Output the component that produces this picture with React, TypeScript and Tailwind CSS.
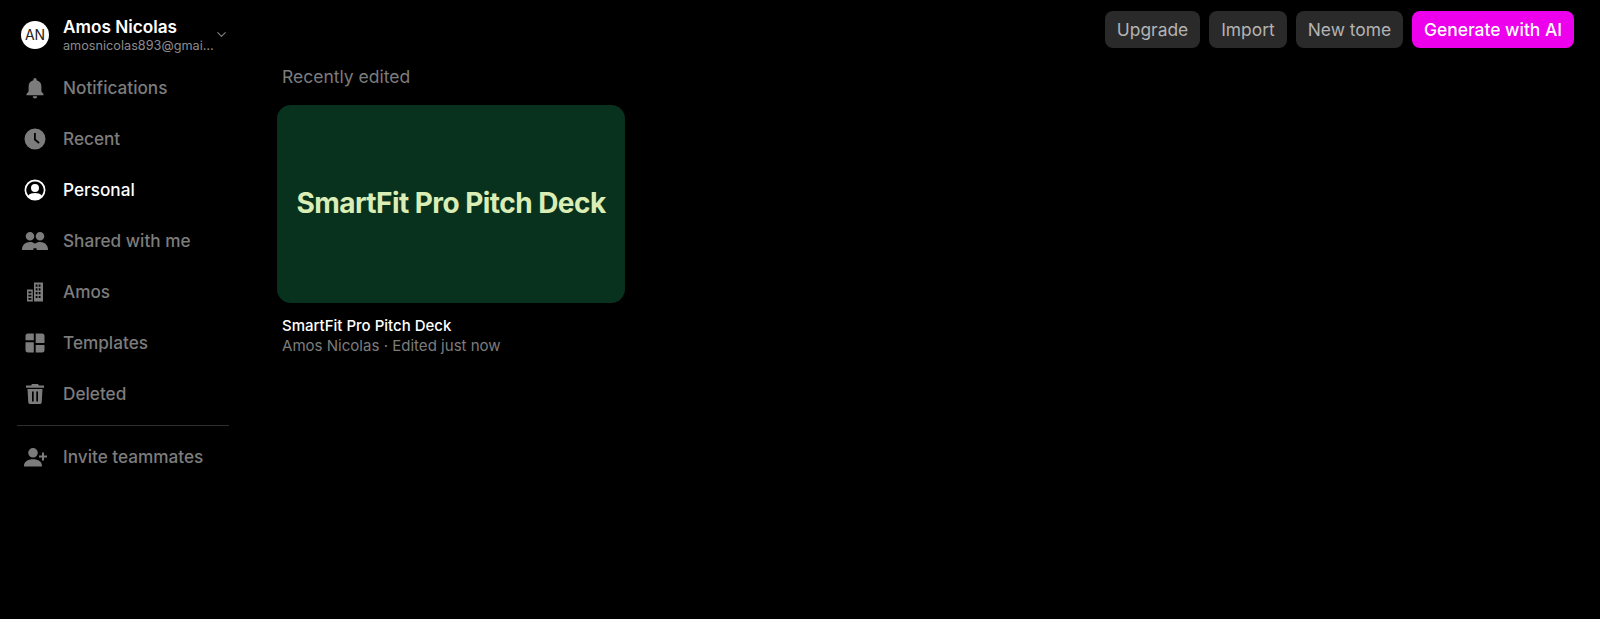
import React from "react";
import { ChevronDown } from "lucide-react";

const icons: Record<string, React.ReactNode> = {
  bell: <path d="M12 2a1.6 1.6 0 0 0-1.6 1.6v.6A6.6 6.6 0 0 0 5.6 10.6v5L3.5 18v1.2h17V18l-2.1-2.400v-5a6.600 6.600 0 0 0-4.800-6.400v-.6A1.600 1.600 0 0 0 12 2Zm-2.200 18.200a2.200 2.200 0 0 0 4.400 0Z" />,
  clock: <path fillRule="evenodd" d="M12 1.500a10.500 10.500 0 1 0 0 21 10.500 10.500 0 0 0 0-21ZM11 6h1.800v6l3.900 3.400-1.200 1.400L11 12.900Z" />,
  person: <path fillRule="evenodd" d="M12 1.500a10.500 10.500 0 1 0 0 21 10.500 10.500 0 0 0 0-21Zm0 1.900a8.600 8.600 0 0 1 6.700 14c-1.400-1.600-4-2.400-6.700-2.400s-5.300.8-6.700 2.400A8.600 8.600 0 0 1 12 3.400Zm0 2.600a4 4 0 1 0 0 8 4 4 0 0 0 0-8Z" />,
  people: <path d="M7 3a4.300 4.300 0 1 1 0 8.600A4.300 4.300 0 0 1 7 3Zm10 0a4.300 4.300 0 1 1 0 8.600A4.300 4.300 0 0 1 17 3ZM-1 20.500c0-4.500 3.400-7.500 8-7.500 2 0 3.700.6 5 1.800 1.300-1.200 3-1.800 5-1.800 4.600 0 8 3 8 7.500v.5H13.600v-.5c0-.4 0-.8-.1-1.200h-3c-.1.400-.1.800-.1 1.200v.5H-1Z" />,
  building: <path fillRule="evenodd" d="M11 2.500h9v19h-9Zm1.700 2v2.200h1.800V4.500Zm3 0v2.200h1.800V4.500Zm-3 3.800v2.200h1.800V8.300Zm3 0v2.200h1.800V8.300Zm-3 3.800v2.200h1.800v-2.200Zm3 0v2.200h1.800v-2.200Zm-3 3.800v2.200h1.800v-2.200Zm3 0v2.200h1.800v-2.200ZM4 9.500h5.800v12H4Zm1.400 2v1.800h3v-1.800Zm0 3.300v1.800h3v-1.800Zm0 3.200v1.800h3V18Z" />,
  templates: <path d="M5 2.500h5.800v6.800H2.500V5A2.500 2.500 0 0 1 5 2.500Zm7.700 0H19A2.500 2.500 0 0 1 21.500 5v7h-8.800ZM2.500 11.200h8.300v10.300H5A2.500 2.500 0 0 1 2.500 19Zm10.200 2.700h8.800V19a2.500 2.500 0 0 1-2.500 2.500h-6.300Z" />,
  trash: <path fillRule="evenodd" d="M9 2h6l1 1.500h5v2.200H3V3.500h5ZM4.500 7h15l-.8 13.500a2 2 0 0 1-2 1.500H7.300a2 2 0 0 1-2-1.500ZM9 9.500v10h1.700v-10Zm4.300 0v10H15v-10Z" />,
  invite: <path d="M10 3a4.800 4.800 0 1 1 0 9.600A4.800 4.800 0 0 1 10 3ZM1 21c0-4.500 3.800-6.800 9-6.800s9 2.300 9 6.800v.5H1ZM19 7.500h2v3h3v2h-3v3h-2v-3h-3v-2h3Z" />,
};

function NavItem({ icon, label, active = false }: { icon: string; label: string; active?: boolean }) {
  return (
    <div className={`flex h-[51px] items-center ${active ? "text-white" : "text-[#7c7c7c]"}`}>
      <div className="flex w-[63px] shrink-0 items-center justify-center pl-[7px]">
        <svg viewBox="0 0 24 24" className="h-[24px] w-[24px] overflow-visible" fill="currentColor">
          {icons[icon]}
        </svg>
      </div>
      <span className="text-[17.2px] font-medium leading-none">{label}</span>
    </div>
  );
}

function TopButton({ children, primary = false }: { children: React.ReactNode; primary?: boolean }) {
  return (
    <button
      className={`flex h-[37px] items-center rounded-[8px] px-[12px] pt-[1px] text-[17.4px] ${
        primary ? "bg-[#ed00eb] font-medium text-white" : "bg-[#2a2a2a] text-[#b3b3b3]"
      }`}
    >
      {children}
    </button>
  );
}

export default function App() {
  return (
    <div className="flex h-[619px] w-[1600px] overflow-hidden bg-black font-['Inter',sans-serif]">
      <aside className="flex w-[246px] shrink-0 flex-col pt-[11px]">
        <div className="flex h-[47px] items-center pl-[21px]">
          <div className="flex h-[28px] w-[28px] shrink-0 items-center justify-center rounded-full bg-white text-[14px] leading-none text-[#222]">
            AN
          </div>
          <div className="ml-[14px] flex w-[152px] shrink-0 flex-col">
            <span className="text-[17.2px] font-semibold leading-[22px] text-white">Amos Nicolas</span>
            <span className="whitespace-nowrap text-[12.7px] leading-[16px] text-[#8c8c8c]">amosnicolas893@gmai…</span>
          </div>
          <ChevronDown className="-ml-[1px] h-[15px] w-[15px] text-[#808080]" strokeWidth={1.75} />
        </div>
        <div className="flex flex-col pt-[4px]">
          <NavItem icon="bell" label="Notifications" />
          <NavItem icon="clock" label="Recent" />
          <NavItem icon="person" label="Personal" active />
          <NavItem icon="people" label="Shared with me" />
          <NavItem icon="building" label="Amos" />
          <NavItem icon="templates" label="Templates" />
          <NavItem icon="trash" label="Deleted" />
        </div>
        <div className="ml-[17px] mt-[6px] h-px w-[212px] bg-[#2e2e2e]" />
        <div className="pt-[5px]">
          <NavItem icon="invite" label="Invite teammates" />
        </div>
      </aside>
      <main className="flex min-w-0 flex-1 flex-col pl-[31px] pr-[26px] pt-[11px]">
        <div className="flex justify-end gap-[9px]">
          <TopButton>Upgrade</TopButton>
          <TopButton>Import</TopButton>
          <TopButton>New tome</TopButton>
          <TopButton primary>Generate with AI</TopButton>
        </div>
        <h2 className="pl-[5px] pt-[17px] text-[17.5px] font-normal leading-[24px] text-[#7c7c7c]">Recently edited</h2>
        <div className="mt-[16px] flex h-[198px] w-[348px] items-center justify-center rounded-[14px] bg-[#09321e] pb-[3px]">
          <span className="text-[28px] font-bold tracking-[-0.55px] text-[#d9edb5]">SmartFit Pro Pitch Deck</span>
        </div>
        <div className="pl-[5px] pt-[13px]">
          <div className="text-[15px] font-medium leading-[20px] text-white">SmartFit Pro Pitch Deck</div>
          <div className="text-[15.05px] leading-[20px] text-[#7c7c7c]">Amos Nicolas · Edited just now</div>
        </div>
      </main>
    </div>
  );
}
